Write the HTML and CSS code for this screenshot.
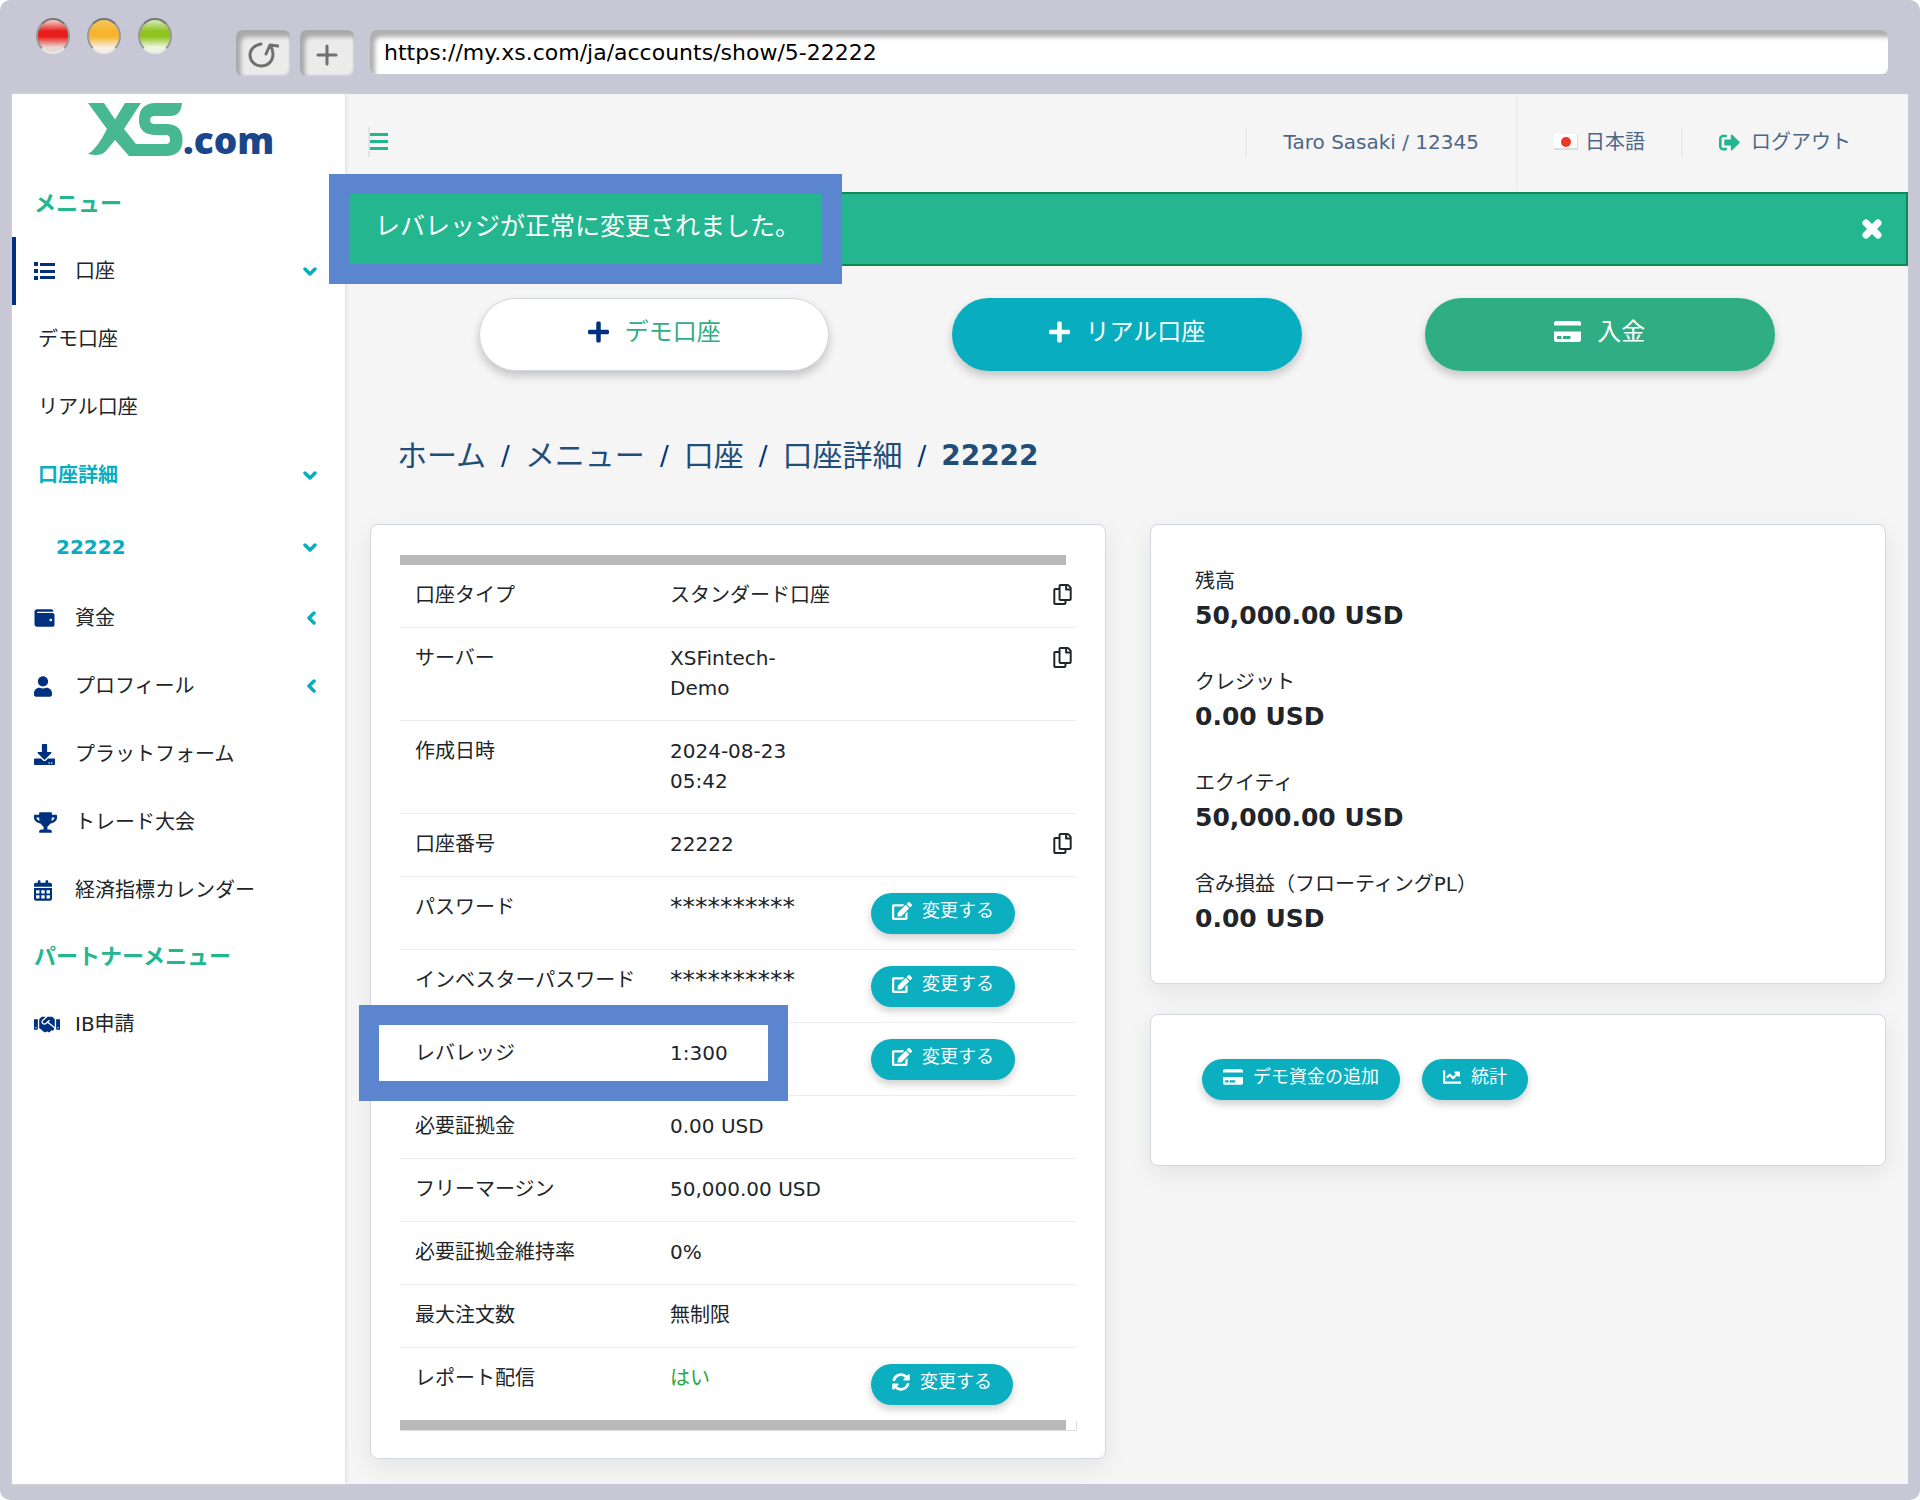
FILE: index.html
```html
<!DOCTYPE html>
<html lang="ja">
<head>
<meta charset="utf-8">
<title>XS.com - 口座詳細</title>
<link rel="stylesheet" href="styles.css">
</head>
<body>
<svg class="sprite" aria-hidden="true">
  <symbol id="i-plus" viewBox="0 0 448 512"><path d="M416 208H272V64c0-17.67-14.33-32-32-32h-32c-17.67 0-32 14.33-32 32v144H32c-17.67 0-32 14.33-32 32v32c0 17.67 14.33 32 32 32h144v144c0 17.67 14.33 32 32 32h32c17.67 0 32-14.33 32-32V304h144c17.67 0 32-14.33 32-32v-32c0-17.67-14.33-32-32-32z"/></symbol>
  <symbol id="i-card" viewBox="0 32 576 448"><path d="M0 432c0 26.5 21.5 48 48 48h480c26.5 0 48-21.5 48-48V256H0v176zm192-68c0-6.6 5.4-12 12-12h136c6.6 0 12 5.4 12 12v40c0 6.6-5.4 12-12 12H204c-6.6 0-12-5.4-12-12v-40zm-128 0c0-6.6 5.4-12 12-12h72c6.6 0 12 5.4 12 12v40c0 6.6-5.4 12-12 12H76c-6.6 0-12-5.4-12-12v-40zM576 80v48H0V80c0-26.5 21.5-48 48-48h480c26.5 0 48 21.5 48 48z"/></symbol>
  <symbol id="i-edit" viewBox="0 0 576 512"><path d="M402.6 83.2l90.2 90.2c3.8 3.8 3.8 10 0 13.8L274.4 405.6l-92.8 10.3c-12.4 1.4-22.9-9.1-21.5-21.5l10.3-92.8L388.8 83.2c3.8-3.8 10-3.8 13.8 0zm162-22.9l-48.8-48.8c-15.2-15.2-39.9-15.2-55.2 0l-35.4 35.4c-3.8 3.8-3.8 10 0 13.8l90.2 90.2c3.8 3.8 10 3.8 13.8 0l35.4-35.4c15.2-15.3 15.2-40 0-55.2zM384 346.2V448H64V128h229.8c3.2 0 6.2-1.3 8.5-3.5l40-40c7.6-7.6 2.2-20.5-8.5-20.5H48C21.5 64 0 85.5 0 112v352c0 26.5 21.5 48 48 48h352c26.5 0 48-21.5 48-48V306.2c0-10.7-12.9-16-20.5-8.5l-40 40c-2.2 2.3-3.5 5.3-3.5 8.5z"/></symbol>
  <symbol id="i-sync" viewBox="0 0 512 512"><path d="M370.72 133.28C339.458 104.008 298.888 87.962 255.848 88c-77.458.068-144.328 53.178-162.791 126.85-1.344 5.363-6.122 9.15-11.651 9.15H24.103c-7.498 0-13.194-6.807-11.807-14.176C33.933 94.924 134.813 8 256 8c66.448 0 126.791 26.136 171.315 68.685L463.03 40.97C478.149 25.851 504 36.559 504 57.941V192c0 13.255-10.745 24-24 24H345.941c-21.382 0-32.09-25.851-16.971-40.971l41.75-41.749zM32 296h134.059c21.382 0 32.09 25.851 16.971 40.971l-41.75 41.75c31.262 29.273 71.835 45.319 114.876 45.28 77.418-.07 144.315-53.144 162.787-126.849 1.344-5.363 6.122-9.15 11.651-9.15h57.304c7.498 0 13.194 6.807 11.807 14.176C478.067 417.076 377.187 504 256 504c-66.448 0-126.791-26.136-171.315-68.685L48.97 471.03C33.851 486.149 8 475.441 8 454.059V320c0-13.255 10.745-24 24-24z"/></symbol>
  <symbol id="i-chart" viewBox="0 0 512 512"><path d="M496 384H64V80c0-8.84-7.16-16-16-16H16C7.16 64 0 71.16 0 80v336c0 17.67 14.33 32 32 32h464c8.84 0 16-7.16 16-16v-32c0-8.84-7.16-16-16-16zM464 96H345.94c-21.38 0-32.09 25.85-16.97 40.97l32.4 32.4L288 242.75l-73.37-73.37c-12.5-12.5-32.76-12.5-45.25 0l-68.69 68.69c-6.25 6.25-6.25 16.38 0 22.63l22.62 22.62c6.25 6.25 16.38 6.25 22.63 0L192 237.25l73.37 73.37c12.5 12.5 32.76 12.5 45.25 0l96-96 32.4 32.4c15.12 15.12 40.97 4.41 40.97-16.97V112c.01-8.84-7.15-16-15.99-16z"/></symbol>
  <symbol id="i-copy" viewBox="0 0 448 512"><path d="M433.941 65.941l-51.882-51.882A48 48 0 0 0 348.118 0H176c-26.51 0-48 21.49-48 48v48H48c-26.51 0-48 21.49-48 48v320c0 26.51 21.49 48 48 48h224c26.51 0 48-21.49 48-48v-48h80c26.51 0 48-21.49 48-48V99.882a48 48 0 0 0-14.059-33.941zM266 464H54a6 6 0 0 1-6-6V150a6 6 0 0 1 6-6h74v224c0 26.51 21.49 48 48 48h96v42a6 6 0 0 1-6 6zm128-96H182a6 6 0 0 1-6-6V54a6 6 0 0 1 6-6h106v88c0 13.255 10.745 24 24 24h88v202a6 6 0 0 1-6 6zm6-256h-64V48h9.632c1.591 0 3.117.632 4.243 1.757l48.368 48.368a6 6 0 0 1 1.757 4.243V112z"/></symbol>
  <symbol id="i-down" viewBox="0 0 14 14"><path d="M2 5l5 5 5-5" fill="none" stroke="currentColor" stroke-width="3.500" stroke-linecap="round" stroke-linejoin="round"/></symbol>
  <symbol id="i-left" viewBox="0 0 14 14"><path d="M11 2L6 7l5 5" fill="none" stroke="currentColor" stroke-width="3.500" stroke-linecap="round" stroke-linejoin="round"/></symbol>
</svg>

<div class="window">
  <header class="toolbar">
    <div class="lights"><span class="light red"></span><span class="light amber"></span><span class="light green"></span></div>
    <button class="tool" type="button" aria-label="再読み込み"><svg class="line" width="32" height="28" viewBox="0 0 32 28"><path d="M14 3C7 4 3 9 3 14c0 6 5 11 11 11 7 0 12-5 12-12 0-3-1-6-3-9M19 13l4-9 8 1"/></svg></button>
    <button class="tool" type="button" aria-label="新しいタブ"><svg class="line" width="22" height="22" viewBox="0 0 22 22"><path d="M11 2v18M2 11h18"/></svg></button>
    <input class="address" type="text" aria-label="アドレス" value="https://my.xs.com/ja/accounts/show/5-22222">
  </header>

  <div class="app">
    <aside class="sidebar">
      <a class="logo" href="#" aria-label="XS.com">
        <svg width="95" height="54" viewBox="0 0 95 54"><path fill="#47b892" d="M0 0H16L27 16.500L37 0H53L36 26L48 41H78Q82 41 82 36.500Q82 32 78 32H68Q51 32 51 17Q51 0 68 0H94Q93 13 82 13H67Q62 13 62 17Q62 21 67 21H78Q94.500 21 94.500 37Q94.500 53 77 53H41L27 37L18 48Q13 54 0 51Q9 46 19 26Z"/></svg>
        <span class="logo-text">.com</span>
      </a>
      <nav>
        <h2 class="menu-title">メニュー</h2>
        <a class="item active" href="#"><svg width="22" height="18" viewBox="0 0 22 18"><path d="M0 0h4v4H0zM6 1h15v3H6zM0 7h4v4H0zM6 8h15v3H6zM0 14h4v4H0zM6 14h15v3H6z"/></svg><span>口座</span><svg class="arrow" width="14" height="14"><use href="#i-down"/></svg></a>
        <a class="item sub" href="#"><span>デモ口座</span></a>
        <a class="item sub" href="#"><span>リアル口座</span></a>
        <a class="item sub current" href="#"><span>口座詳細</span><svg class="arrow" width="14" height="14"><use href="#i-down"/></svg></a>
        <a class="item leaf current" href="#"><span>22222</span><svg class="arrow" width="14" height="14"><use href="#i-down"/></svg></a>
        <a class="item" href="#"><svg width="21" height="20" viewBox="0 0 512 512"><path d="M461.2 128H80c-8.84 0-16-7.16-16-16s7.160-16 16-16h384c8.840 0 16-7.160 16-16 0-26.510-21.490-48-48-48H64C28.650 32 0 60.650 0 96v320c0 35.350 28.650 64 64 64h397.200c28.020 0 50.800-21.530 50.800-48V176c0-26.470-22.780-48-50.800-48zM416 336c-17.670 0-32-14.330-32-32s14.330-32 32-32 32 14.330 32 32-14.330 32-32 32z"/></svg><span>資金</span><svg class="arrow" width="14" height="14"><use href="#i-left"/></svg></a>
        <a class="item" href="#"><svg width="18" height="21" viewBox="0 0 448 512"><path d="M224 256c70.700 0 128-57.300 128-128S294.700 0 224 0 96 57.300 96 128s57.300 128 128 128zm89.600 32h-16.700c-22.200 10.200-46.900 16-72.900 16s-50.600-5.800-72.900-16h-16.700C60.200 288 0 348.200 0 422.400V464c0 26.500 21.500 48 48 48h352c26.500 0 48-21.500 48-48v-41.600c0-74.200-60.200-134.400-134.400-134.400z"/></svg><span>プロフィール</span><svg class="arrow" width="14" height="14"><use href="#i-left"/></svg></a>
        <a class="item" href="#"><svg width="21" height="21" viewBox="0 0 512 512"><path d="M216 0h80c13.300 0 24 10.700 24 24v168h87.700c17.800 0 26.700 21.500 14.100 34.100L269.700 378.300c-7.500 7.500-19.800 7.500-27.300 0L90.100 226.100c-12.600-12.600-3.700-34.100 14.100-34.100H192V24c0-13.300 10.700-24 24-24zm296 376v112c0 13.300-10.700 24-24 24H24c-13.300 0-24-10.700-24-24V376c0-13.300 10.700-24 24-24h146.700l49 49c20.100 20.100 52.500 20.100 72.600 0l49-49H488c13.300 0 24 10.700 24 24zm-124 88c0-11-9-20-20-20s-20 9-20 20 9 20 20 20 20-9 20-20zm64 0c0-11-9-20-20-20s-20 9-20 20 9 20 20 20 20-9 20-20z"/></svg><span>プラットフォーム</span></a>
        <a class="item" href="#"><svg width="23" height="21" viewBox="0 0 576 512"><path d="M552 64H448V24c0-13.300-10.700-24-24-24H152c-13.300 0-24 10.700-24 24v40H24C10.700 64 0 74.700 0 88v56c0 35.700 22.500 72.400 61.900 100.700 31.500 22.700 69.800 37.100 110 41.700C203.300 338.500 240 360 240 360v72h-48c-35.300 0-64 20.700-64 56v12c0 6.600 5.400 12 12 12h296c6.600 0 12-5.400 12-12v-12c0-35.300-28.700-56-64-56h-48v-72s36.700-21.500 68.100-73.600c40.300-4.600 78.600-19 110-41.700 39.300-28.300 61.900-65 61.900-100.700V88c0-13.300-10.700-24-24-24zM99.300 192.800C74.900 175.200 64 155.600 64 144v-16h64.200c1 32.600 5.800 61.200 12.800 86.200-15.100-5.200-29.200-12.400-41.700-21.400zM512 144c0 16.100-17.700 36.100-35.300 48.800-12.500 9-26.700 16.200-41.800 21.400 7-25 11.800-53.600 12.800-86.200H512v16z"/></svg><span>トレード大会</span></a>
        <a class="item" href="#"><svg width="18" height="21" viewBox="0 0 448 512"><path fill-rule="evenodd" d="M400 64h-48V16c0-8.800-7.200-16-16-16h-32c-8.800 0-16 7.200-16 16v48H160V16c0-8.800-7.200-16-16-16h-32c-8.800 0-16 7.200-16 16v48H48C21.500 64 0 85.500 0 112v48h448v-48c0-26.500-21.500-48-48-48zM0 192h448v272c0 26.500-21.500 48-48 48H48c-26.500 0-48-21.500-48-48zM52 252v76h84v-76zM182 252v76h84v-76zM312 252v76h84v-76zM52 376v76h84v-76zM182 376v76h84v-76zM312 376v76h84v-76z"/></svg><span>経済指標カレンダー</span></a>
        <h2 class="menu-title">パートナーメニュー</h2>
        <a class="item" href="#"><svg width="26" height="21" viewBox="0 0 640 512"><path d="M434.700 64h-85.900c-8 0-15.700 3-21.600 8.400l-98.300 90c-.1.100-.2.300-.3.400-16.600 15.600-16.300 40.500-2.100 56 12.700 13.900 39.400 17.600 56.100 2.700.1-.1.300-.1.400-.2l79.900-73.200c6.500-5.900 16.700-5.500 22.600 1 6 6.500 5.500 16.600-1 22.600l-26.100 23.900L504 313.800c2.900 2.400 5.500 5 7.900 7.700V128l-54.600-54.600c-5.900-6-14.100-9.400-22.600-9.400zM544 128.200v223.900c0 17.700 14.300 32 32 32h64V128.200h-96zm48 223.900c-8.800 0-16-7.200-16-16s7.200-16 16-16 16 7.200 16 16-7.200 16-16 16zM0 384h64c17.700 0 32-14.300 32-32V128.200H0V384zm48-63.900c8.800 0 16 7.200 16 16s-7.200 16-16 16-16-7.200-16-16c0-8.900 7.200-16 16-16zm435.900 18.600L334.600 217.500l-30 27.500c-29.700 27.100-75.200 24.500-101.700-4.400-26.900-29.400-24.800-74.900 4.400-101.700L289.100 64h-83.800c-8.500 0-16.600 3.400-22.600 9.400L128 128v223.900h18.300l90.500 81.900c27.400 22.300 67.700 18.100 90-9.300l.2-.2 17.900 15.500c15.900 13 39.400 10.500 52.300-5.400l31.400-38.600 5.400 4.400c13.700 11.100 33.900 9.100 45-4.700l9.500-11.700c11.200-13.800 9.100-33.900-4.600-45.100z"/></svg><span>IB申請</span></a>
      </nav>
    </aside>

    <main class="main">
      <div class="topbar">
        <button class="burger" type="button" aria-label="メニュー切替"><svg class="accent" width="19" height="18" viewBox="0 0 19 18"><path d="M0 0h18v3H0zM0 7h18v3H0zM0 14h18v3H0z"/></svg></button>
        <span class="top-user">Taro Sasaki / 12345</span>
        <a class="top-lang" href="#"><svg width="24" height="16" viewBox="0 0 24 16"><path fill="#dcdcdc" d="M0 0h24v16H0z"/><path fill="#fff" d="M0 0h23v14H0z"/><circle cx="12" cy="8" r="5" fill="#ee3524"/></svg><span>日本語</span></a>
        <a class="top-out" href="#"><svg class="accent" width="21" height="21" viewBox="0 0 512 512"><path d="M497 273L329 441c-15 15-41 4.500-41-17v-96H152c-13.300 0-24-10.700-24-24v-96c0-13.300 10.700-24 24-24h136V88c0-21.400 25.900-32 41-17l168 168c9.300 9.400 9.300 24.600 0 34zM192 436v-40c0-6.600-5.400-12-12-12H96c-17.700 0-32-14.300-32-32V160c0-17.700 14.300-32 32-32h84c6.600 0 12-5.400 12-12V76c0-6.600-5.400-12-12-12H96c-53 0-96 43-96 96v192c0 53 43 96 96 96h84c6.600 0 12-5.400 12-12z"/></svg><span>ログアウト</span></a>
      </div>

      <div class="alert" role="status">
        <span>レバレッジが正常に変更されました。</span>
        <button class="close" type="button" aria-label="閉じる"><svg width="22" height="22" viewBox="0 0 22 22" stroke="#fff" stroke-width="7" stroke-linecap="round"><path d="M5 5l12 12M17 5L5 17"/></svg></button>
      </div>

      <div class="actions">
        <button class="big demo" type="button"><svg width="21" height="24"><use href="#i-plus"/></svg><span>デモ口座</span></button>
        <button class="big real" type="button"><svg width="21" height="24"><use href="#i-plus"/></svg><span>リアル口座</span></button>
        <button class="big deposit" type="button"><svg width="27" height="21"><use href="#i-card"/></svg><span>入金</span></button>
      </div>

      <nav class="crumbs"><a href="#">ホーム</a><i>/</i><a href="#">メニュー</a><i>/</i><a href="#">口座</a><i>/</i><a href="#">口座詳細</a><i>/</i><b>22222</b></nav>

      <div class="columns">
        <section class="card details">
          <div class="scrollbar"></div>
          <table>
            <colgroup><col class="c-name"><col class="c-value"><col><col class="c-copy"></colgroup>
            <tr><th>口座タイプ</th><td>スタンダード口座</td><td></td><td><button class="copy" type="button" aria-label="コピー"><svg width="19" height="21"><use href="#i-copy"/></svg></button></td></tr>
            <tr><th>サーバー</th><td>XSFintech-Demo</td><td></td><td><button class="copy" type="button" aria-label="コピー"><svg width="19" height="21"><use href="#i-copy"/></svg></button></td></tr>
            <tr><th>作成日時</th><td>2024-08-23 05:42</td><td></td><td></td></tr>
            <tr><th>口座番号</th><td>22222</td><td></td><td><button class="copy" type="button" aria-label="コピー"><svg width="19" height="21"><use href="#i-copy"/></svg></button></td></tr>
            <tr><th>パスワード</th><td class="secret">**********</td><td class="act"><button class="pill" type="button"><svg width="20" height="18"><use href="#i-edit"/></svg><span>変更する</span></button></td><td></td></tr>
            <tr><th>インベスターパスワード</th><td class="secret">**********</td><td class="act"><button class="pill" type="button"><svg width="20" height="18"><use href="#i-edit"/></svg><span>変更する</span></button></td><td></td></tr>
            <tr class="marked"><th>レバレッジ</th><td>1:300</td><td class="act"><button class="pill" type="button"><svg width="20" height="18"><use href="#i-edit"/></svg><span>変更する</span></button></td><td></td></tr>
            <tr><th>必要証拠金</th><td>0.00 USD</td><td></td><td></td></tr>
            <tr><th>フリーマージン</th><td>50,000.00 USD</td><td></td><td></td></tr>
            <tr><th>必要証拠金維持率</th><td>0%</td><td></td><td></td></tr>
            <tr><th>最大注文数</th><td>無制限</td><td></td><td></td></tr>
            <tr><th>レポート配信</th><td class="yes">はい</td><td class="act"><button class="pill" type="button"><svg width="18" height="18"><use href="#i-sync"/></svg><span>変更する</span></button></td><td></td></tr>
          </table>
          <div class="scrollbar foot"></div>
        </section>

        <div class="side">
          <dl class="card balances">
            <div><dt>残高</dt><dd>50,000.00 USD</dd></div>
            <div><dt>クレジット</dt><dd>0.00 USD</dd></div>
            <div><dt>エクイティ</dt><dd>50,000.00 USD</dd></div>
            <div><dt>含み損益（フローティングPL）</dt><dd>0.00 USD</dd></div>
          </dl>
          <section class="card tools">
            <button class="pill" type="button"><svg width="20" height="16"><use href="#i-card"/></svg><span>デモ資金の追加</span></button>
            <button class="pill" type="button"><svg width="18" height="18"><use href="#i-chart"/></svg><span>統計</span></button>
          </section>
        </div>
      </div>
    </main>
  </div>
</div>
</body>
</html>
```

FILE: styles.css
```css
*, *::before, *::after { box-sizing: border-box; }

body {
  margin: 0;
  background: #fff;
  color: #212529;
  font: 20px/30px "DejaVu Sans", "Noto Sans CJK JP", sans-serif;
}

a { color: inherit; text-decoration: none; }
button { font: inherit; color: inherit; border: 0; background: none; padding: 0; cursor: pointer; }
svg { display: block; flex: none; fill: currentColor; }
.sprite { position: absolute; width: 0; height: 0; }
.accent { color: #24b78f; }
.line { fill: none; stroke: #707070; stroke-width: 3px; stroke-linecap: round; stroke-linejoin: round; }

/* Browser frame */
.window {
  display: flex;
  flex-direction: column;
  min-height: 100vh;
  padding: 0 12px 16px;
  background: #c8c7d5;
  border-radius: 10px;
}
.toolbar {
  display: flex;
  align-items: flex-start;
  gap: 10px;
  height: 94px;
  padding: 30px 20px 0 24px;
}
.lights { display: flex; gap: 17px; width: 190px; margin-top: -12px; }
.light {
  width: 34px;
  height: 36px;
  border-radius: 50%;
  border: 2px solid;
  border-color: #777 #999 #e8e8e8;
}
.red { background: linear-gradient(#f3c9c0 2%, #e81c1c 35%, #e81c1c 52%, #e8d8d0 85%); }
.amber { background: linear-gradient(#f8c660 2%, #f7b52f 35%, #f7b52f 52%, #f8eee0 85%); }
.green { background: linear-gradient(#d0e8b0 2%, #8fc420 35%, #8fc420 52%, #eef6e0 85%); }
.tool {
  display: grid;
  place-items: center;
  width: 54px;
  height: 46px;
  padding-top: 4px;
  border-radius: 6px;
  background: #ebebeb;
  box-shadow: inset 5px 7px 4px #a9a9a9, inset -1px -1px 2px #ccc;
}
.address {
  flex: 1;
  min-width: 0;
  height: 44px;
  margin-left: 6px;
  padding: 0 14px;
  border: 0;
  border-radius: 6px;
  background: #fff;
  box-shadow: inset 5px 7px 4px #b0b0b0;
  color: #000;
  font: inherit;
  font-size: 22px;
}

.app { display: flex; flex: 1; background: #f5f5f5; }

/* Sidebar */
.sidebar {
  flex: none;
  width: 334px;
  background: #fff;
  border-right: 1px solid #e4e4e4;
  box-shadow: 1px 0 3px #e4e4e4;
}
.logo { display: flex; align-items: flex-start; height: 77px; padding: 9px 0 0 76px; }
.logo-text {
  color: #1a468b;
  font: 800 37px/54px "Open Sans", "Noto Sans", sans-serif;
  padding-top: 10px;
}
.menu-title { margin: 0; padding: 0 22px; color: #24b78f; font-size: 22px; line-height: 66px; }
.item {
  display: grid;
  grid-template-columns: 41px 1fr 14px;
  align-items: center;
  height: 68px;
  padding: 0 28px 0 22px;
}
.item > svg:first-child { color: #00317f; }
.item .arrow { color: #08aec0; }
.active { border-left: 4px solid #00317f; padding-left: 18px; }
.sub, .leaf { grid-template-columns: 1fr 14px; padding-left: 26px; }
.leaf { height: 75px; padding-left: 44px; }
.current { color: #08aec0; font-weight: 700; }

/* Header */
.main { flex: 1; min-width: 0; }
.topbar { display: flex; align-items: center; height: 98px; padding: 0 0 2px 22px; color: #4d6787; }
.burger { margin-right: auto; border-left: 2px solid #e3e3e3; height: 30px; }
.top-user { padding: 0 37px; border-left: 2px solid #ebebeb; }
.top-lang { display: flex; align-items: center; gap: 7px; align-self: stretch; padding: 0 36px; border-left: 2px solid #efefef; }
.top-out { display: flex; align-items: center; gap: 11px; padding: 0 57px 0 36px; border-left: 2px solid #ebebeb; }

.alert {
  position: relative;
  display: flex;
  align-items: center;
  justify-content: space-between;
  height: 74px;
  padding: 0 23px 4px 27px;
  border: 2px solid #0d8a58;
  background: #24b78f;
  color: #fff;
  font-size: 25px;
}
.alert::after {
  content: "";
  position: absolute;
  left: -19px;
  top: -20px;
  width: 513px;
  height: 110px;
  border: 20px solid #5b86cf;
  pointer-events: none;
}
.close { padding-top: 4px; }

.actions {
  display: grid;
  grid-template-columns: repeat(3, 1fr);
  justify-items: center;
  padding: 32px 72px 0;
}
.big {
  display: flex;
  align-items: center;
  justify-content: center;
  gap: 16px;
  width: 74%;
  height: 73px;
  padding-bottom: 6px;
  border-radius: 37px;
  box-shadow: 0 5px 10px #0003;
  color: #fff;
  font-size: 24px;
}
.demo { background: #fff; border: 1px solid #d3d7e0; color: #2fae84; }
.demo svg { color: #00317f; }
.real { background: #08aec0; }
.deposit { background: #2fae84; }

.crumbs {
  display: flex;
  align-items: center;
  gap: 15px;
  padding: 65px 51px 48px;
  color: #1f4e79;
  font-size: 30px;
  line-height: 40px;
}
.crumbs i { font-style: normal; font-size: 26px; color: #00317f; }
.crumbs b { font-size: 28px; }

/* Cards */
.columns {
  display: grid;
  grid-template-columns: 1fr 1fr;
  align-items: start;
  gap: 44px;
  padding: 0 22px 24px 24px;
}
.card {
  margin: 0;
  border: 1px solid #d3d7de;
  border-radius: 8px;
  background: #fff;
  box-shadow: 0 8px 24px #00000012;
}
.details { padding: 30px 29px 28px; }
.scrollbar { height: 10px; border-right: 10px solid #fff; background: #b9b9b9; }
.foot { box-shadow: 1px 1px 0 #ddd; }

table { width: 100%; table-layout: fixed; border-collapse: separate; border-spacing: 0; }
.c-name { width: 255px; }
.c-value { width: 201px; }
.c-copy { width: 38px; }
th, td {
  padding: 15px 24px 17px 15px;
  border-bottom: 1px solid #ededed;
  vertical-align: top;
  text-align: left;
  font-weight: 400;
}
th { padding-right: 0; white-space: nowrap; }
tr:last-child > * { border-bottom: 0; }
td:last-child { padding-right: 0; }
td.act { padding: 16px 0 15px 15px; }
td.secret { padding-right: 0; font-size: 25px; }
.copy { display: block; padding-top: 4px; }
.yes { color: #28a745; }

.marked th { position: relative; }
.marked th::after {
  content: "";
  position: absolute;
  left: -41px;
  top: -18px;
  width: 429px;
  height: 96px;
  border: 20px solid #5b86cf;
  pointer-events: none;
}

.pill {
  display: flex;
  align-items: center;
  gap: 10px;
  height: 41px;
  padding: 0 21px 6px;
  border-radius: 21px;
  background: #0bafc0;
  box-shadow: 0 4px 8px #0003;
  color: #fff;
  font-size: 18px;
  line-height: 24px;
}

.side { display: grid; gap: 30px; }
.balances { display: grid; gap: 31px; padding: 41px 44px 44px; }
.balances dd { margin: 0; font-size: 25px; font-weight: 700; line-height: 40px; }
.tools { display: flex; gap: 22px; padding: 44px 51px 65px; }
```
